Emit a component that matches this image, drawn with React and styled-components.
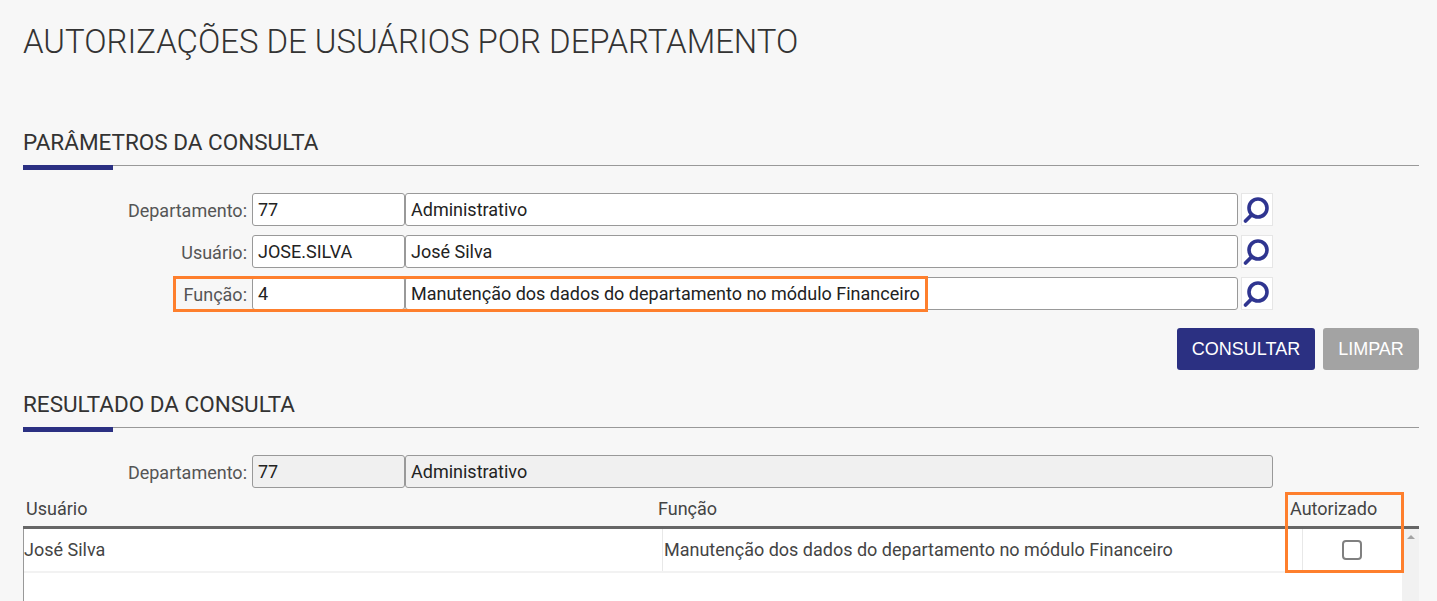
import React from "react";
import styled, { createGlobalStyle } from "styled-components";

const Global = createGlobalStyle`
  html, body { margin: 0; padding: 0; height: 601px; overflow: hidden; background: #f7f7f7; }
  body { font-family: Roboto, "Liberation Sans", sans-serif; }
`;

const Page = styled.div`
  height: 601px;
  overflow: hidden;
  padding: 0 18px 0 23px;
  box-sizing: border-box;
  background: #f7f7f7;
  color: #333;
`;

const Title = styled.h1`
  margin: 0;
  padding-top: 22px;
  height: 106px;
  box-sizing: border-box;
  font-size: 32.95px;
  line-height: 40px;
  font-weight: 300;
  color: #333;
  white-space: nowrap;
`;

const Section = styled.div`
  position: relative;
  height: ${(p) => p.$height}px;
  box-sizing: border-box;
  border-bottom: 1px solid #999;
  font-size: 22.5px;
  line-height: 30px;
  font-weight: 400;
  color: #333;
  padding-top: ${(p) => p.$top}px;
  &::after {
    content: "";
    position: absolute;
    left: 0;
    bottom: -5px;
    width: 90px;
    height: 5px;
    background: #2b3082;
  }
`;

const Form = styled.div`
  display: flex;
  flex-direction: column;
  gap: 9px;
  padding-top: ${(p) => p.$top}px;
`;

const Row = styled.div`
  position: relative;
  display: flex;
  align-items: center;
  height: 33px;
`;

const Label = styled.label`
  width: 229px;
  padding-right: 5px;
  box-sizing: border-box;
  text-align: right;
  font-size: 18px;
  color: #555;
  padding-top: 2px;
`;

const Field = styled.div`
  width: ${(p) => p.$width}px;
  height: 33px;
  box-sizing: border-box;
  border: 1px solid #999;
  border-radius: 3px;
  background: ${(p) => (p.$disabled ? "#f0f0f0" : "#fff")};
  padding-left: 5px;
  font-size: 18px;
  line-height: 32px;
  color: #222;
  white-space: nowrap;
`;

const SearchButton = styled.div`
  width: 32px;
  height: 33px;
  margin-left: 3px;
  box-sizing: border-box;
  border: 1px solid #e6e6e6;
  background: #fff;
  display: flex;
  align-items: center;
  justify-content: center;
`;

const Highlight = styled.div`
  position: absolute;
  box-sizing: border-box;
  border: 3px solid #fe7f2d;
  pointer-events: none;
`;

const RowHighlight = styled(Highlight)`
  left: 150px;
  top: -1px;
  width: 755px;
  height: 36px;
`;

const Actions = styled.div`
  display: flex;
  justify-content: flex-end;
  gap: 8px;
  padding-top: 18px;
`;

const Button = styled.button`
  width: ${(p) => p.$width}px;
  height: 42px;
  border: 0;
  border-radius: 3px;
  padding: 0;
  background: ${(p) => p.$bg};
  color: #fff;
  font-family: "Liberation Sans", Arial, sans-serif;
  font-size: 18px;
`;

const Table = styled.div`
  position: relative;
  margin-top: 4px;
`;

const HeadRow = styled.div`
  display: grid;
  grid-template-columns: 635px 632px 1fr;
  height: 37px;
  box-sizing: border-box;
  border-bottom: 3px solid #666;
  font-size: 18px;
  line-height: 34px;
  color: #444;
`;

const HeadCell = styled.div`
  padding-left: ${(p) => p.$pad}px;
  white-space: nowrap;
`;

const Body = styled.div`
  display: flex;
  height: 80px;
  border-left: 1px solid #999;
`;

const Rows = styled.div`
  flex: 1;
  background: #fff;
`;

const DataRow = styled.div`
  display: grid;
  grid-template-columns: 638px 640px 1fr;
  height: 44px;
  box-sizing: border-box;
  border-bottom: 2px solid #f2f2f2;
  font-size: 18px;
  line-height: 42px;
  color: #444;
`;

const Cell = styled.div`
  padding-left: ${(p) => p.$pad}px;
  border-left: ${(p) => (p.$divider ? "1px solid #e8e8e8" : "0")};
  display: ${(p) => (p.$center ? "flex" : "block")};
  align-items: center;
  justify-content: center;
  white-space: nowrap;
`;

const Checkbox = styled.span`
  width: 20px;
  height: 20px;
  box-sizing: border-box;
  border: 2px solid #808080;
  border-radius: 4px;
  background: #fff;
  margin-right: 2px;
`;

const Scrollbar = styled.div`
  width: 17px;
  background: #f1f1f1;
  display: flex;
  justify-content: center;
  padding-top: 6px;
  box-sizing: border-box;
`;

const ArrowUp = styled.span`
  width: 0;
  height: 0;
  border-left: 4px solid transparent;
  border-right: 4px solid transparent;
  border-bottom: 4px solid #a3a3a3;
`;

const ColumnHighlight = styled(Highlight)`
  left: 1262px;
  top: 0;
  width: 119px;
  height: 81px;
`;

const SearchIcon = () => (
  <svg width="30" height="31" viewBox="0 0 30 31" fill="none" stroke="#2f3590" strokeLinecap="round">
    <circle cx="16" cy="14" r="9" strokeWidth="3.6" />
    <path d="M9.5 21 L3.5 27" strokeWidth="3.8" />
  </svg>
);

const rows = [
  ["Departamento:", "77", "Administrativo"],
  ["Usuário:", "JOSE.SILVA", "José Silva"],
  ["Função:", "4", "Manutenção dos dados do departamento no módulo Financeiro"],
];

export default function App() {
  return (
    <>
      <Global />
      <Page>
        <Title>AUTORIZAÇÕES DE USUÁRIOS POR DEPARTAMENTO</Title>
        <Section $height={60} $top={21}>PARÂMETROS DA CONSULTA</Section>
        <Form $top={27}>
          {rows.map(([label, code, name], i) => (
            <Row key={label}>
              <Label>{label}</Label>
              <Field $width={153}>{code}</Field>
              <Field $width={833}>{name}</Field>
              <SearchButton><SearchIcon /></SearchButton>
              {i === 2 && <RowHighlight />}
            </Row>
          ))}
        </Form>
        <Actions>
          <Button $width={138} $bg="#2b3082">CONSULTAR</Button>
          <Button $width={96} $bg="#a3a3a3">LIMPAR</Button>
        </Actions>
        <Section $height={58} $top={19}>RESULTADO DA CONSULTA</Section>
        <Form $top={27}>
          <Row>
            <Label>Departamento:</Label>
            <Field $width={153} $disabled>77</Field>
            <Field $width={868} $disabled>Administrativo</Field>
          </Row>
        </Form>
        <Table>
          <HeadRow>
            <HeadCell $pad={3}>Usuário</HeadCell>
            <HeadCell>Função</HeadCell>
            <HeadCell>Autorizado</HeadCell>
          </HeadRow>
          <Body>
            <Rows>
              <DataRow>
                <Cell>José Silva</Cell>
                <Cell $divider $pad={1}>Manutenção dos dados do departamento no módulo Financeiro</Cell>
                <Cell $divider $center><Checkbox /></Cell>
              </DataRow>
            </Rows>
            <Scrollbar><ArrowUp /></Scrollbar>
          </Body>
          <ColumnHighlight />
        </Table>
      </Page>
    </>
  );
}
